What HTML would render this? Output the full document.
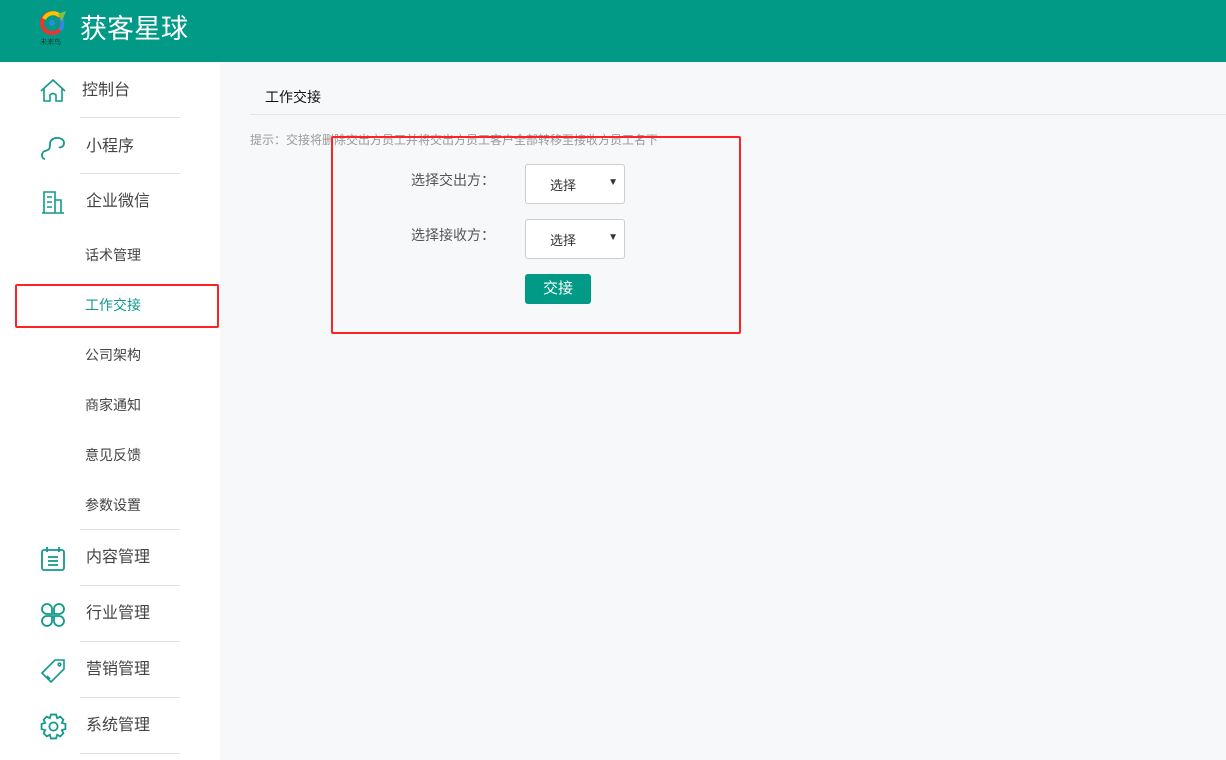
<!DOCTYPE html>
<html><head><meta charset="utf-8"><style>
*{margin:0;padding:0;box-sizing:border-box}
body{width:1226px;height:760px;overflow:hidden;background:#f7f8fa;font-family:"Liberation Sans","Noto Sans CJK SC",sans-serif;position:relative}
.hd{position:absolute;left:0;top:0;width:1226px;height:62px;background:#009a87}
.hd .t{position:absolute;left:80px;top:10px;color:#fff;font-size:27px;line-height:38px}
.sb{position:absolute;left:0;top:62px;width:220px;height:698px;background:#fff}
.a{position:absolute;font-size:16px;color:#444;line-height:20px}
.s{position:absolute;font-size:14px;color:#444;left:85px;line-height:18px}
.ln{position:absolute;left:80px;width:100px;height:1px;background:#e2e2e2}
.ic{position:absolute;left:40px}
.abs{position:absolute}
.sel{position:absolute;left:525px;width:100px;height:40px;background:#fff;border:1px solid #ccc;border-radius:3px;font-size:13px;color:#333}
.sel span{position:absolute;left:24px;top:10px}
.sel i{position:absolute;right:6px;top:12px;font-style:normal;font-size:10px}
</style></head><body>
<div class="hd">
<svg class="abs" style="left:40px;top:11px" width="26" height="35" viewBox="0 0 26 35">
<circle cx="12" cy="12" r="10" fill="none" stroke="#e33" stroke-width="4"/>
<path d="M4 8 A10 10 0 0 1 20 5" stroke="#f8c400" stroke-width="4" fill="none"/>
<path d="M20 6 A10 10 0 0 1 20 19" stroke="#2a8ee0" stroke-width="4" fill="none"/>
<path d="M18 3 L26 0 L22 10 Z" fill="#7cc242"/>
<circle cx="12" cy="12" r="3" fill="#2a8ee0"/>
<text x="0" y="33" font-size="7" fill="#222" font-family="Noto Serif CJK SC,serif">未来鸟</text>
</svg>
<div class="t">获客星球</div>
</div>
<div class="sb"></div>
<svg class="ic" style="top:79px" width="26" height="24" viewBox="0 0 26 24" fill="none" stroke="#11998a" stroke-width="1.6"><path d="M1 12 L13 1 L25 12 M4 9 V22 H10 V16 Q13 13 16 16 V22 H22 V9"/></svg>
<div class="a" style="left:82px;top:81px">控制台</div>
<div class="ln" style="top:117px"></div>
<svg class="ic" style="top:135px" width="26" height="26" viewBox="0 0 26 26" fill="none" stroke="#11998a" stroke-width="1.8"><path d="M5 24 C1 24 1 17 5 16 C9 15 10 14 10 9 C10 1 24 1 24 8 C24 12 20 13 19 12"/></svg>
<div class="a" style="left:86px;top:137px">小程序</div>
<div class="ln" style="top:173px"></div>
<svg class="ic" style="top:190px" width="26" height="24" viewBox="0 0 26 24" fill="none" stroke="#11998a" stroke-width="1.6"><path d="M2 23 H24 M4 23 V2 H15 V23 M15 10 H21 V23 M7 7 H12 M7 12 H12 M7 17 H12"/></svg>
<div class="a" style="left:86px;top:192px">企业微信</div>
<div class="s" style="top:246px">话术管理</div>
<div class="abs" style="left:15px;top:284px;width:204px;height:44px;border:2px solid #f22;border-radius:2px"></div>
<div class="s" style="top:296px;color:#11998a">工作交接</div>
<div class="s" style="top:346px">公司架构</div>
<div class="s" style="top:396px">商家通知</div>
<div class="s" style="top:446px">意见反馈</div>
<div class="s" style="top:496px">参数设置</div>
<div class="ln" style="top:529px"></div>
<svg class="ic" style="top:546px" width="26" height="26" viewBox="0 0 26 26" fill="none" stroke="#11998a" stroke-width="1.8"><rect x="2" y="4" width="22" height="20" rx="2"/><path d="M7 1 V6 M19 1 V6 M8 11 H18 M8 15 H18 M8 19 H18"/></svg>
<div class="a" style="left:86px;top:548px">内容管理</div>
<div class="ln" style="top:585px"></div>
<svg class="ic" style="top:602px" width="26" height="26" viewBox="0 0 26 26" fill="none" stroke="#11998a" stroke-width="1.8"><path d="M12 12 H7 A5 5 0 1 1 12 7 Z M14 12 V7 A5 5 0 1 1 19 12 Z M12 14 V19 A5 5 0 1 1 7 14 Z M14 14 H19 A5 5 0 1 1 14 19 Z"/></svg>
<div class="a" style="left:86px;top:604px">行业管理</div>
<div class="ln" style="top:641px"></div>
<svg class="ic" style="top:658px" width="26" height="26" viewBox="0 0 26 26" fill="none" stroke="#11998a" stroke-width="1.6"><path d="M2 15 L15 2 H24 V11 L11 24 Z M7 18 L10 21"/><circle cx="19.5" cy="6.5" r="1.3"/></svg>
<div class="a" style="left:86px;top:660px">营销管理</div>
<div class="ln" style="top:697px"></div>
<svg class="ic" style="top:713px" width="27" height="27" viewBox="0 0 26 26" fill="none" stroke="#11998a" stroke-width="1.7"><path d="M10.5 1.5 H15.5 L16.5 5 L19.5 3.5 L22.5 6.5 L21 9.5 L24.5 10.5 V15.5 L21 16.5 L22.5 19.5 L19.5 22.5 L16.5 21 L15.5 24.5 H10.5 L9.5 21 L6.5 22.5 L3.5 19.5 L5 16.5 L1.5 15.5 V10.5 L5 9.5 L3.5 6.5 L6.5 3.5 L9.5 5 Z"/><circle cx="13" cy="13" r="4"/></svg>
<div class="a" style="left:86px;top:716px">系统管理</div>
<div class="ln" style="top:753px"></div>

<div class="abs" style="left:265px;top:87px;font-size:14px;color:#111">工作交接</div>
<div class="abs" style="left:250px;top:114px;width:976px;height:1px;background:#e3e5e8"></div>
<div class="abs" style="left:250px;top:131px;font-size:12px;color:#999">提示：交接将删除交出方员工并将交出方员工客户全部转移至接收方员工名下</div>
<div class="abs" style="left:331px;top:136px;width:410px;height:198px;border:2px solid #f22;border-radius:2px"></div>
<div class="abs" style="left:411px;top:170px;font-size:14px;color:#555">选择交出方：</div>
<div class="abs" style="left:411px;top:225px;font-size:14px;color:#555">选择接收方：</div>
<div class="sel" style="top:164px"><span>选择</span><i>▼</i></div>
<div class="sel" style="top:219px"><span>选择</span><i>▼</i></div>
<div class="abs" style="left:525px;top:274px;width:66px;height:30px;background:#009a87;border-radius:3px;color:#fff;font-size:15px;text-align:center;line-height:30px">交接</div>
</body></html>
